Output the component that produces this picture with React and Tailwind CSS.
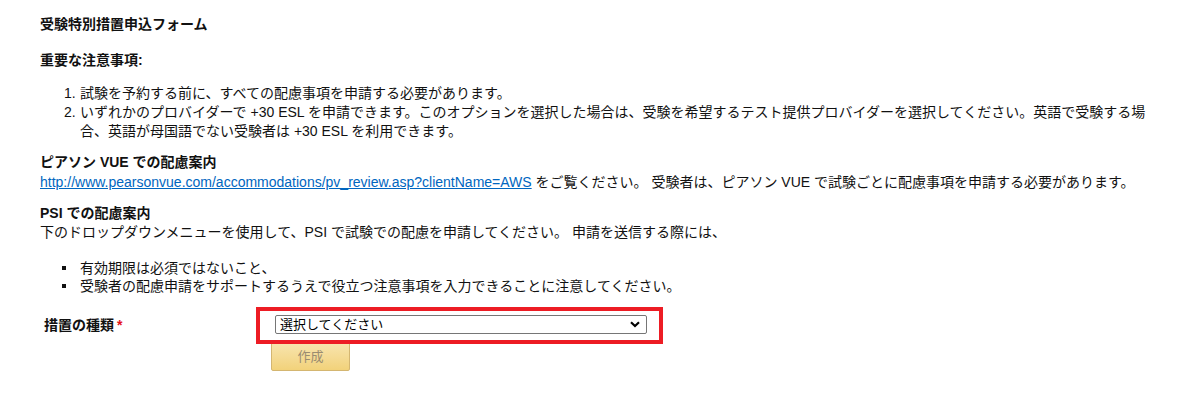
export default function App() {
  const font = { fontFamily: '"Liberation Sans", Arial, "Noto Sans CJK JP", sans-serif' }
  return (
    <div className="min-h-[406px] bg-white text-[14px] leading-[19px] text-[#111] pl-[40px] pr-[20px] pt-[15px]" style={font}>
      <h1 className="font-bold text-[14px]">受験特別措置申込フォーム</h1>

      <p className="font-bold mt-[17px]">重要な注意事項:</p>
      <div className="mt-[14px] pl-[24px]">
        <div className="flex">
          <span className="w-[16px] shrink-0">1.</span>
          <span>試験を予約する前に、すべての配慮事項を申請する必要があります。</span>
        </div>
        <div className="flex">
          <span className="w-[16px] shrink-0">2.</span>
          <span>
            いずれかのプロバイダーで +30 ESL を申請できます。このオプションを選択した場合は、受験を希望するテスト提供プロバイダーを選択してください。英語で受験する場<br />
            合、英語が母国語でない受験者は +30 ESL を利用できます。
          </span>
        </div>
      </div>

      <p className="font-bold mt-[12px]">ピアソン VUE での配慮案内</p>
      <p className="mt-[1px]">
        <a href="#" className="text-[#0066c0] underline">http://www.pearsonvue.com/accommodations/pv_review.asp?clientName=AWS</a>
        {' '}をご覧ください。 受験者は、ピアソン VUE で試験ごとに配慮事項を申請する必要があります。
      </p>

      <p className="font-bold mt-[12px]">PSI での配慮案内</p>
      <p>下のドロップダウンメニューを使用して、PSI で試験での配慮を申請してください。 申請を送信する際には、</p>

      <ul className="mt-[17px] pl-[22px]">
        <li className="flex items-center h-[18px]">
          <span className="w-[4px] h-[4px] bg-[#111] mr-[14px]"></span>
          有効期限は必須ではないこと、
        </li>
        <li className="flex items-center h-[18px]">
          <span className="w-[4px] h-[4px] bg-[#111] mr-[14px]"></span>
          受験者の配慮申請をサポートするうえで役立つ注意事項を入力できることに注意してください。
        </li>
      </ul>

      <div className="flex mt-[20px]">
        <div className="w-[235px] shrink-0 pl-[4px] pt-[1px] font-bold">
          措置の種類<span className="text-[#e4121a] ml-[3px]">*</span>
        </div>
        <div>
          <div className="relative w-[372px]">
            <div className="flex items-center justify-between h-[19px] border border-[#767676] rounded-[2px] bg-white pl-[4px] pr-[6px]">
              <span className="text-[13px] text-black">選択してください</span>
              <svg width="10" height="7" viewBox="0 0 10 7" fill="none">
                <path d="M1 1.2 L5 5 L9 1.2" stroke="#000" strokeWidth="2.2" />
              </svg>
            </div>
            <div className="absolute -left-[19px] -right-[16px] -top-[8px] -bottom-[10px] border-[4px] border-[#ed1c24] z-10 pointer-events-none"></div>
          </div>
          <button
            type="button"
            disabled
            className="mt-[7px] -ml-[4px] w-[79px] h-[30px] border border-[#d4b671] rounded-[2px] bg-gradient-to-b from-[#f8e5b0] to-[#f2d27a] text-[#9a8c70] text-[13px]"
          >
            作成
          </button>
        </div>
      </div>
    </div>
  )
}
